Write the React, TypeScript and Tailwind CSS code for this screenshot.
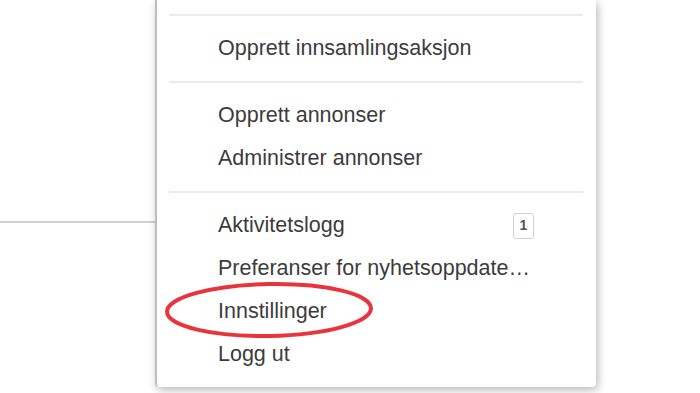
import React from "react";

const Item = ({ children, right }: { children: React.ReactNode; right?: React.ReactNode }) => (
  <div className="flex h-[43px] items-center justify-between pl-[61px] pr-[62px]">
    <span className="whitespace-nowrap">{children}</span>
    {right}
  </div>
);

const Sep = () => <div className="ml-[12px] mr-[13px] h-[2px] bg-[#e9ebee]" />;

export default function App() {
  return (
    <div
      className="relative flex h-[393px] w-[700px] overflow-hidden bg-white text-[21.5px] text-[#3c3c3c]"
      style={{ fontFamily: '"Liberation Sans", Arial, sans-serif' }}
    >
      <div className="w-[155px] shrink-0">
        <div className="mt-[221px] h-[2px] bg-[#d0d0d3]" />
      </div>
      <div className="flex h-[387px] w-[441px] flex-col rounded-b-[4px] border-l-2 border-[#bdbdc0] bg-white pt-[14px] shadow-[2px_3px_8px_rgba(0,0,0,0.28)]">
        <Sep />
        <div className="py-[11px]">
          <Item>Opprett innsamlingsaksjon</Item>
        </div>
        <Sep />
        <div className="py-[11px]">
          <Item>Opprett annonser</Item>
          <Item>Administrer annonser</Item>
        </div>
        <Sep />
        <div className="pt-[11px]">
          <Item
            right={
              <span className="flex h-[26px] w-[21px] items-center justify-center rounded-[3px] border border-[#cfd1d5] text-[14px] font-bold text-[#555]">
                1
              </span>
            }
          >
            Aktivitetslogg
          </Item>
          <Item>Preferanser for nyhetsoppdate…</Item>
          <Item>Innstillinger</Item>
          <Item>Logg ut</Item>
        </div>
      </div>
      <svg
        className="pointer-events-none absolute left-[160px] top-[278px]"
        width="220"
        height="66"
        viewBox="0 0 220 66"
      >
        <ellipse cx="109" cy="32" rx="102" ry="26" fill="none" stroke="#e8343a" strokeWidth="4" transform="rotate(-1 109 32)" />
      </svg>
    </div>
  );
}
